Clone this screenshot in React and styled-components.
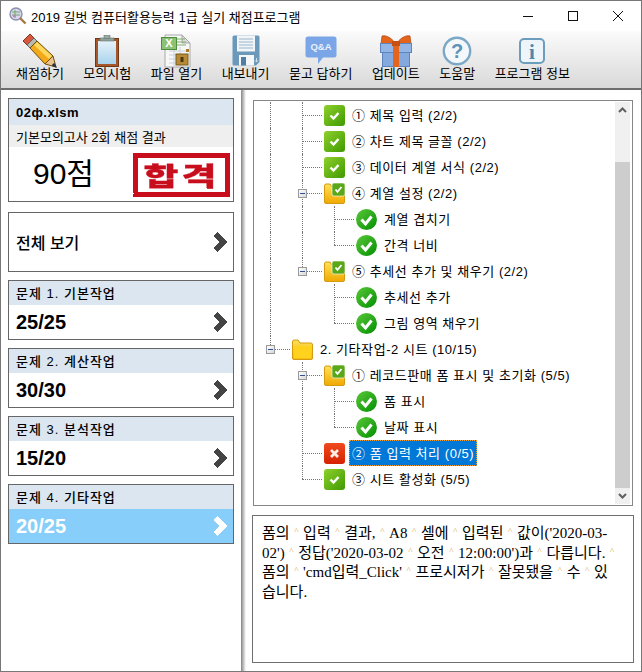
import React from "react";
import styled, { createGlobalStyle } from "styled-components";

const GlobalStyle = createGlobalStyle`
  html, body { margin: 0; padding: 0; background: #fff; }
  * { box-sizing: border-box; }
`;

const SANS = `"Liberation Sans", "Noto Sans CJK KR", sans-serif`;

const PencilIcon = () => (
  <svg width="34" height="34" viewBox="0 0 34 34">
    <polygon points="0,7 7,0 11,4 4,11" fill="#d8583f" stroke="#7a3a20" />
    <polygon points="4,11 11,4 14,7 7,14" fill="#b9b9b0" stroke="#666" />
    <polygon points="7,14 14,7 30,22 22,30" fill="#f3a91a" stroke="#6b4e0e" />
    <polygon points="11,11 14,8 29,22 26,25" fill="#fcd95e" />
    <polygon points="22,30 30,22 33,33" fill="#e9c48f" stroke="#6b4e0e" />
    <polygon points="29.5,30 31.5,29 34,34 29,32" fill="#333" />
  </svg>
);

const ClipboardIcon = () => (
  <svg width="24" height="32" viewBox="0 0 24 32">
    <defs>
      <linearGradient id="clipPaper" x1="0" y1="0" x2="0" y2="1">
        <stop offset="0" stopColor="#e6f2fa" />
        <stop offset="1" stopColor="#a9d3ec" />
      </linearGradient>
    </defs>
    <rect x="0.5" y="3.5" width="23" height="28" fill="#a5572a" stroke="#6f3a1c" />
    <rect x="3" y="6" width="18" height="23" fill="url(#clipPaper)" />
    <rect x="5" y="3" width="14" height="3" fill="#8fa39c" stroke="#66776f" strokeWidth="0.6" />
    <rect x="9" y="0.5" width="6" height="3" fill="#98aaa4" stroke="#66776f" strokeWidth="0.6" />
  </svg>
);

const ExcelIcon = () => (
  <svg width="30" height="34" viewBox="0 0 30 34">
    <polygon points="4,1 21,1 29,9 29,33 4,33" fill="#f7f7f7" stroke="#a8a8a8" />
    <polygon points="21,1 21,9 29,9" fill="#dcdcdc" stroke="#a8a8a8" />
    <path d="M8 17H26M8 21H26M8 25H26M8 29H26M13 13V32M19 13V32" stroke="#c9d3dc" fill="none" />
    <rect x="0.5" y="3.5" width="15" height="12" fill="#8cc274" stroke="#4d8f3d" />
    <text x="8" y="13" fontFamily="Liberation Sans, sans-serif" fontSize="11" fontWeight="700" fill="#fff" textAnchor="middle">X</text>
    <path d="M16 5H24M16 8H25M16 11H25" stroke="#7fae6b" />
    <rect x="15" y="20" width="12" height="11" fill="#b78a36" stroke="#7a5a1e" />
    <rect x="19.5" y="23" width="3" height="5" fill="#4b3510" />
    <rect x="25" y="15" width="3" height="3" fill="#a87e2e" />
  </svg>
);

const FloppyIcon = () => (
  <svg width="28" height="31" viewBox="0 0 28 31">
    <path d="M2 0.5H26Q27.5 .5 27.5 2V27L24 30.5H2Q.5 30.5 .5 29V2Q.5 .5 2 .5Z" fill="#6c99ba" />
    <rect x="5" y="0.5" width="18" height="16" fill="#f1f5f8" />
    <path d="M7 4H21M7 7H21M7 10H21M7 13H21" stroke="#9ab5c9" />
    <rect x="7" y="20" width="15" height="10.5" fill="#f4f6f8" />
    <rect x="9" y="22" width="5" height="8.5" fill="#4f7fa4" />
    <path d="M24.5 23V27M23 25.5L24.5 27L26 25.5" stroke="#cfe0ec" fill="none" />
  </svg>
);

const QnaIcon = () => (
  <svg width="32" height="29" viewBox="0 0 32 29">
    <path d="M3 0.5H29Q31.5 .5 31.5 3V19Q31.5 21.5 29 21.5H18L13 28V21.5H3Q.5 21.5 .5 19V3Q.5 .5 3 .5Z" fill="#7aa5e6" />
    <text x="16" y="14" fontFamily="Liberation Sans, sans-serif" fontSize="9.5" fontWeight="700" fill="#e8f0fb" textAnchor="middle">Q&amp;A</text>
  </svg>
);

const GiftIcon = () => (
  <svg width="32" height="32" viewBox="0 0 32 32">
    <path d="M15 8C11 2 5 0 2 1L1 9Z" fill="#e5641c" stroke="#a8420e" strokeWidth="0.7" />
    <path d="M17 8C21 2 27 0 30 1L31 9Z" fill="#e5641c" stroke="#a8420e" strokeWidth="0.7" />
    <rect x="2.5" y="15" width="27" height="16.5" fill="#84a9de" stroke="#5f83bb" />
    <rect x="0.5" y="8.5" width="31" height="9" fill="#93b6e6" stroke="#5f83bb" />
    <rect x="13" y="8" width="6" height="24" fill="#e5641c" />
    <rect x="12" y="6" width="8" height="5" fill="#c94f10" />
  </svg>
);

const HelpIcon = () => (
  <svg width="30" height="30" viewBox="0 0 30 30">
    <circle cx="15" cy="15" r="13.2" fill="#f4f8fb" stroke="#7ba8c6" strokeWidth="2.4" />
    <text x="15" y="22" fontFamily="Liberation Sans, sans-serif" fontSize="20" fontWeight="700" fill="#5f93b8" textAnchor="middle">?</text>
  </svg>
);

const InfoIcon = () => (
  <svg width="26" height="26" viewBox="0 0 26 26">
    <rect x="1" y="1" width="24" height="24" rx="4" fill="#eef5fa" stroke="#6d9dbd" strokeWidth="2" />
    <text x="13" y="21" fontFamily="Liberation Serif, serif" fontSize="21" fontWeight="700" fill="#4f86ab" textAnchor="middle">i</text>
  </svg>
);

const AppIcon = () => (
  <svg width="18" height="18" viewBox="0 0 18 18">
    <circle cx="7" cy="7" r="6" fill="#d9d6ee" stroke="#8c8fb0" strokeWidth="1.4" />
    <path d="M3 5H11M3 8H11M6 3V11" stroke="#6fa86b" />
    <rect x="4" y="8" width="3" height="2" fill="#c983b4" />
    <path d="M11 11L16.5 16.5" stroke="#a27a45" strokeWidth="2.4" />
  </svg>
);

const Chevron = ({ $color = "#444" }) => (
  <svg width="14" height="20" viewBox="0 0 14 20" shapeRendering="crispEdges">
    <polygon points="4,0 14,10 4,20 0,16 6,10 0,4" fill={$color} />
  </svg>
);

const SquareCheck = () => (
  <svg width="21" height="21" viewBox="0 0 21 21">
    <defs>
      <linearGradient id="sqGreen" x1="0" y1="0" x2="1" y2="1">
        <stop offset="0" stopColor="#8ed02c" />
        <stop offset="1" stopColor="#3f9a00" />
      </linearGradient>
    </defs>
    <rect width="21" height="21" rx="3" fill="url(#sqGreen)" />
    <path d="M6.5 10.5L9.5 13.5L14.5 8" stroke="#fff" strokeWidth="2.4" fill="none" />
  </svg>
);

const SquareCross = () => (
  <svg width="21" height="21" viewBox="0 0 21 21">
    <defs>
      <linearGradient id="sqRed" x1="0" y1="0" x2="0" y2="1">
        <stop offset="0" stopColor="#f04a1e" />
        <stop offset="1" stopColor="#d42200" />
      </linearGradient>
    </defs>
    <rect width="21" height="21" rx="3" fill="url(#sqRed)" />
    <path d="M7 7L14 14M14 7L7 14" stroke="#fdeee6" strokeWidth="2.8" fill="none" />
  </svg>
);

const RoundCheck = () => (
  <svg width="21" height="21" viewBox="0 0 21 21">
    <defs>
      <linearGradient id="roundGreen" x1="0" y1="0" x2="1" y2="1">
        <stop offset="0" stopColor="#5cc83a" />
        <stop offset="1" stopColor="#008f00" />
      </linearGradient>
    </defs>
    <circle cx="10.5" cy="10.5" r="10.5" fill="url(#roundGreen)" />
    <path d="M5.5 10.5L9.5 15L15.5 7.5" stroke="#fff" strokeWidth="3" fill="none" />
  </svg>
);

const Folder = ({ $badge }) => (
  <svg width="21" height="21" viewBox="0 0 21 21">
    <defs>
      <linearGradient id="folderBody" x1="0" y1="0" x2="0" y2="1">
        <stop offset="0" stopColor="#ffe25a" />
        <stop offset="1" stopColor="#f0a800" />
      </linearGradient>
    </defs>
    <path d="M0.5 3Q.5 1 2 1H6L8 4H19Q20.5 4 20.5 6V19Q20.5 20.5 19 20.5H2Q.5 20.5 .5 19Z" fill="url(#folderBody)" stroke="#d49a10" />
    {$badge ? (
      <>
        <rect x="8" y="0" width="13" height="13" rx="2" fill="#5aa81a" stroke="#fff" strokeWidth="0.6" />
        <path d="M11.5 6.5L13.5 8.8L17.5 4" stroke="#fff" strokeWidth="1.8" fill="none" />
      </>
    ) : (
      <rect x="1.5" y="7" width="18" height="12.5" fill="#ffd21e" />
    )}
  </svg>
);

const ICONS = {
  check: SquareCheck,
  cross: SquareCross,
  round: RoundCheck,
  folder: () => <Folder />,
  folderCheck: () => <Folder $badge />,
};

const TOOLS = [
  { label: "채점하기", Icon: PencilIcon },
  { label: "모의시험", Icon: ClipboardIcon },
  { label: "파일 열기", Icon: ExcelIcon },
  { label: "내보내기", Icon: FloppyIcon },
  { label: "묻고 답하기", Icon: QnaIcon },
  { label: "업데이트", Icon: GiftIcon },
  { label: "도움말", Icon: HelpIcon },
  { label: "프로그램 정보", Icon: InfoIcon },
];

const PROBLEMS = [
  { title: "문제 1. 기본작업", score: "25/25" },
  { title: "문제 2. 계산작업", score: "30/30" },
  { title: "문제 3. 분석작업", score: "15/20" },
  { title: "문제 4. 기타작업", score: "20/25", active: true },
];

const TREE = [
  { guides: ["pass", "tee"], icon: "check", label: "① 제목 입력 (2/2)" },
  { guides: ["pass", "tee"], icon: "check", label: "② 차트 제목 글꼴 (2/2)" },
  { guides: ["pass", "tee"], icon: "check", label: "③ 데이터 계열 서식 (2/2)" },
  { guides: ["pass", "tee"], toggle: true, icon: "folderCheck", label: "④ 계열 설정 (2/2)" },
  { guides: ["pass", "pass", "tee"], icon: "round", label: "계열 겹치기" },
  { guides: ["pass", "pass", "elbow"], icon: "round", label: "간격 너비" },
  { guides: ["pass", "elbow"], toggle: true, icon: "folderCheck", label: "⑤ 추세선 추가 및 채우기 (2/2)" },
  { guides: ["pass", "blank", "tee"], icon: "round", label: "추세선 추가" },
  { guides: ["pass", "blank", "elbow"], icon: "round", label: "그림 영역 채우기" },
  { guides: ["elbow"], toggle: true, icon: "folder", label: "2. 기타작업-2 시트 (10/15)" },
  { guides: ["blank", "tee"], toggle: true, icon: "folderCheck", label: "① 레코드판매 폼 표시 및 초기화 (5/5)" },
  { guides: ["blank", "pass", "tee"], icon: "round", label: "폼 표시" },
  { guides: ["blank", "pass", "elbow"], icon: "round", label: "날짜 표시" },
  { guides: ["blank", "tee"], icon: "cross", label: "② 폼 입력 처리 (0/5)", selected: true },
  { guides: ["blank", "elbow"], icon: "check", label: "③ 시트 활성화 (5/5)" },
];

const DETAIL_LINES = [
  ["폼의", "입력", "결과,", "A8", "셀에", "입력된", "값이('2020-03-"],
  ["02')", "정답('2020-03-02", "오전", "12:00:00')과", "다릅니다.", ""],
  ["폼의", "'cmd입력_Click'", "프로시저가", "잘못됐을", "수", "있"],
  ["습니다."],
];

const App = () => {
  return (
    <Window>
      <GlobalStyle />
      <TitleBar>
        <AppIcon />
        <TitleText>2019 길벗 컴퓨터활용능력 1급 실기 채점프로그램</TitleText>
        <WindowButtons>
          <WindowButton>
            <svg width="10" height="10" viewBox="0 0 10 10"><path d="M0 5.5H10" stroke="#111" /></svg>
          </WindowButton>
          <WindowButton>
            <svg width="10" height="10" viewBox="0 0 10 10"><rect x="0.5" y="0.5" width="9" height="9" fill="none" stroke="#111" /></svg>
          </WindowButton>
          <WindowButton>
            <svg width="10" height="10" viewBox="0 0 10 10"><path d="M0 0L10 10M10 0L0 10" stroke="#111" /></svg>
          </WindowButton>
        </WindowButtons>
      </TitleBar>

      <Toolbar>
        {TOOLS.map(({ label, Icon }) => (
          <ToolButton key={label}>
            <ToolIcon><Icon /></ToolIcon>
            <ToolLabel>{label}</ToolLabel>
          </ToolButton>
        ))}
      </Toolbar>

      <Main>
        <LeftPanel>
          <ResultCard>
            <FileName>02ф.xlsm</FileName>
            <ExamName>기본모의고사 2회 채점 결과</ExamName>
            <ScoreRow>
              <BigScore>90점</BigScore>
              <Stamp>
                <StampText>합격</StampText>
              </Stamp>
            </ScoreRow>
          </ResultCard>

          <AllCard>
            <AllLabel>전체 보기</AllLabel>
            <Chevron />
          </AllCard>

          {PROBLEMS.map((item) => (
            <ProblemCard key={item.title}>
              <ProblemTitle>{item.title}</ProblemTitle>
              <ProblemScore $active={item.active}>
                <span>{item.score}</span>
                <Chevron $color={item.active ? "#fff" : "#444"} />
              </ProblemScore>
            </ProblemCard>
          ))}
        </LeftPanel>

        <Divider />

        <RightPanel>
          <TreeBox>
            <TreeList>
              {TREE.map((row, i) => {
                const RowIcon = ICONS[row.icon];
                return (
                  <TreeRow key={i}>
                    {row.guides.map((kind, j) => (
                      <Guide key={j} $kind={kind}>
                        {row.toggle && j === row.guides.length - 1 && <Toggle />}
                      </Guide>
                    ))}
                    <NodeIcon><RowIcon /></NodeIcon>
                    <NodeLabel $selected={row.selected}>{row.label}</NodeLabel>
                  </TreeRow>
                );
              })}
            </TreeList>
            <ScrollBar>
              <ScrollButton>
                <svg width="9" height="6" viewBox="0 0 9 6"><path d="M1 5L4.5 1.5L8 5" stroke="#606060" strokeWidth="2" fill="none" /></svg>
              </ScrollButton>
              <ScrollTrack>
                <ScrollThumb />
              </ScrollTrack>
              <ScrollButton>
                <svg width="9" height="6" viewBox="0 0 9 6"><path d="M1 1L4.5 4.5L8 1" stroke="#606060" strokeWidth="2" fill="none" /></svg>
              </ScrollButton>
            </ScrollBar>
          </TreeBox>

          <DetailBox>
            {DETAIL_LINES.map((line, i) => (
              <DetailLine key={i}>
                {line.map((word, j) => (
                  <React.Fragment key={j}>
                    {j > 0 && <Caret>^</Caret>}
                    {word}
                  </React.Fragment>
                ))}
              </DetailLine>
            ))}
          </DetailBox>
        </RightPanel>
      </Main>

      <svg width="0" height="0" style={{ position: "absolute" }}>
        <filter id="stampRough">
          <feTurbulence type="fractalNoise" baseFrequency="0.55" numOctaves="2" seed="4" />
          <feDisplacementMap in="SourceGraphic" scale="1.6" />
        </filter>
      </svg>
    </Window>
  );
};

const Window = styled.div`
  width: 642px;
  height: 672px;
  border: 1px solid #777;
  display: flex;
  flex-direction: column;
  background: #fff;
  overflow: hidden;
  font-family: ${SANS};
  color: #000;
`;

const TitleBar = styled.div`
  height: 30px;
  flex: none;
  display: flex;
  align-items: center;
  padding-left: 8px;
  background: #fff;
`;

const TitleText = styled.div`
  margin-left: 4px;
  font-size: 13px;
  white-space: nowrap;
`;

const WindowButtons = styled.div`
  margin-left: auto;
  margin-right: 1px;
  display: flex;
`;

const WindowButton = styled.div`
  width: 45px;
  height: 30px;
  display: flex;
  align-items: center;
  justify-content: center;
`;

const Toolbar = styled.div`
  height: 59px;
  flex: none;
  display: flex;
  gap: 19.5px;
  padding-left: 15px;
  background: linear-gradient(#fbfbfb, #d9d9d9);
  border-bottom: 2px solid #6d6d6d;
`;

const ToolButton = styled.div`
  display: flex;
  flex-direction: column;
  align-items: center;
`;

const ToolIcon = styled.div`
  height: 36px;
  display: flex;
  align-items: center;
  justify-content: center;
  padding-top: 3px;
`;

const ToolLabel = styled.div`
  font-size: 13px;
  line-height: 16px;
  margin-top: -1px;
  white-space: nowrap;
`;

const Main = styled.div`
  flex: 1;
  min-height: 0;
  display: flex;
`;

const LeftPanel = styled.div`
  width: 240px;
  flex: none;
  display: flex;
  flex-direction: column;
  gap: 8px;
  padding: 8px 7px 0 7px;
`;

const Card = styled.div`
  border: 1px solid #666;
  background: #fff;
  flex: none;
`;

const ResultCard = styled(Card)`
  height: 104px;
  margin-bottom: 2px;
`;

const FileName = styled.div`
  height: 26px;
  background: #dce6f1;
  padding-left: 7px;
  display: flex;
  align-items: center;
  font-size: 13px;
  font-weight: 700;
  letter-spacing: 0.5px;
`;

const ExamName = styled.div`
  height: 22px;
  background: #efefef;
  padding-left: 7px;
  display: flex;
  align-items: center;
  font-size: 13px;
`;

const ScoreRow = styled.div`
  height: 54px;
  display: flex;
  align-items: center;
  justify-content: space-between;
  padding: 2px 3px 0 24px;
`;

const BigScore = styled.div`
  font-size: 30px;
  margin-top: -9px;
`;

const Stamp = styled.div`
  width: 97px;
  height: 44px;
  border: 5px solid #c8101e;
  display: flex;
  align-items: center;
  justify-content: center;
  overflow: hidden;
  filter: url(#stampRough);
`;

const StampText = styled.span`
  color: #c8101e;
  font-family: "Noto Sans CJK KR", sans-serif;
  font-weight: 900;
  font-size: 38px;
  line-height: 1;
  letter-spacing: 3px;
  -webkit-text-stroke: 0.4px #c8101e;
  transform: scaleY(0.68);
`;

const AllCard = styled(Card)`
  height: 60px;
  display: flex;
  align-items: center;
  justify-content: space-between;
  padding: 0 6px 0 7px;
`;

const AllLabel = styled.div`
  font-size: 16px;
  font-weight: 500;
`;

const ProblemCard = styled(Card)`
  height: 60px;
  display: flex;
  flex-direction: column;
`;

const ProblemTitle = styled.div`
  height: 24px;
  flex: none;
  background: #dce6f1;
  padding: 0 0 2px 7px;
  display: flex;
  align-items: center;
  font-size: 13px;
  font-weight: 500;
  letter-spacing: 1px;
`;

const ProblemScore = styled.div`
  flex: 1;
  display: flex;
  align-items: center;
  justify-content: space-between;
  padding: 0 6px 0 7px;
  font-size: 20px;
  font-weight: 700;
  background: ${(p) => (p.$active ? "#87cefa" : "#fff")};
  color: ${(p) => (p.$active ? "#fff" : "#000")};
`;

const Divider = styled.div`
  width: 5px;
  flex: none;
  background: linear-gradient(90deg, #858585, #b5b5b5 40%, #e8e8e8 80%, #fff);
`;

const RightPanel = styled.div`
  flex: 1;
  min-width: 0;
  padding: 10px 0 0 6px;
  display: flex;
  flex-direction: column;
  gap: 9px;
`;

const TreeBox = styled.div`
  width: 380px;
  height: 406px;
  margin-left: 1px;
  flex: none;
  border: 1px solid #85858a;
  display: flex;
  padding-right: 2px;
  background: #fff;
`;

const TreeList = styled.div`
  flex: 1;
  min-width: 0;
  padding-top: 1px;
  overflow: hidden;
`;

const TreeRow = styled.div`
  height: 26px;
  display: flex;
  align-items: center;
`;

const Guide = styled.span`
  position: relative;
  flex: 0 0 32px;
  height: 26px;

  &::before {
    content: "";
    display: ${(p) => (p.$kind === "blank" ? "none" : "block")};
    position: absolute;
    left: 16px;
    top: 0;
    height: ${(p) => (p.$kind === "elbow" ? "13px" : "26px")};
    border-left: 1px dotted #777;
  }

  &::after {
    content: "";
    display: ${(p) => (p.$kind === "tee" || p.$kind === "elbow" ? "block" : "none")};
    position: absolute;
    left: 16px;
    right: -4px;
    top: 13px;
    border-top: 1px dotted #777;
  }
`;

const Toggle = styled.span`
  position: absolute;
  z-index: 1;
  left: 12px;
  top: 9px;
  width: 9px;
  height: 9px;
  border: 1px solid #9a9a9a;
  background: linear-gradient(135deg, #fff, #d8d8d8);

  &::after {
    content: "";
    position: absolute;
    left: 1px;
    top: 3px;
    width: 5px;
    height: 1px;
    background: #2f4f9f;
  }
`;

const NodeIcon = styled.span`
  flex: none;
  width: 21px;
  height: 21px;
  margin-left: 6px;
  display: block;

  svg {
    display: block;
  }
`;

const NodeLabel = styled.span`
  flex: none;
  height: 26px;
  margin-left: 4px;
  padding: 0 3px 2px;
  display: flex;
  align-items: center;
  font-size: 13px;
  letter-spacing: 0.55px;
  white-space: nowrap;
  color: ${(p) => (p.$selected ? "#fff" : "#000")};
  background: ${(p) => (p.$selected ? "#0078d7" : "transparent")};
  outline: ${(p) => (p.$selected ? "1px dotted #f0a030" : "none")};
  outline-offset: -1px;
`;

const ScrollBar = styled.div`
  width: 15px;
  flex: none;
  margin: 1px 0;
  display: flex;
  flex-direction: column;
  background: #f0f0f0;
`;

const ScrollButton = styled.div`
  height: 16px;
  flex: none;
  display: flex;
  align-items: center;
  justify-content: center;
`;

const ScrollTrack = styled.div`
  flex: 1;
  padding-top: 44px;
  display: flex;
`;

const ScrollThumb = styled.div`
  flex: 1;
  background: #cdcdcd;
`;

const DetailBox = styled.div`
  width: 382px;
  height: 148px;
  flex: none;
  border: 1px solid #6f6f6f;
  padding: 8px 0 0 9px;
  font-family: "Liberation Serif", "Noto Sans CJK KR", serif;
  font-size: 15px;
  line-height: 19.7px;
  background: #fff;
`;

const DetailLine = styled.div`
  white-space: nowrap;
`;

const Caret = styled.span`
  display: inline-block;
  width: 13.5px;
  font-size: 9px;
  line-height: 1;
  text-align: center;
  color: #d8a040;
  vertical-align: 4px;
`;

export default App;
